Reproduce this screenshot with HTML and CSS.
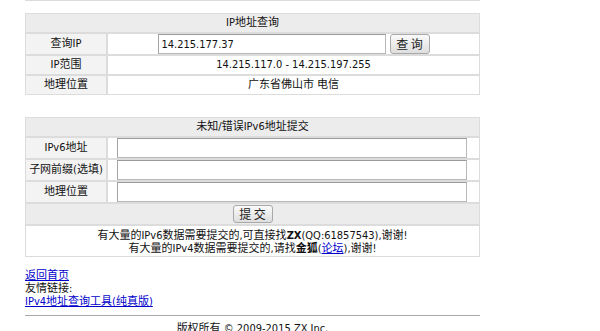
FILE: index.html
```html
<!DOCTYPE html>
<html lang="zh-CN">
<head>
<meta charset="UTF-8">
<meta name="viewport" content="width=device-width, initial-scale=1.0">
<title>IP地址查询</title>
<link rel="stylesheet" href="styles.css">
</head>
<body>
<div class="page">
  <table class="grid prev">
    <colgroup><col class="col-label"><col></colgroup>
    <tr><td class="label"></td><td></td></tr>
  </table>

  <table class="grid query">
    <colgroup><col class="col-label"><col></colgroup>
    <tr><th colspan="2">IP地址查询</th></tr>
    <tr>
      <td class="label">查询IP</td>
      <td class="value">
        <div class="search-box">
          <input type="text" class="ip-input" value="14.215.177.37">
          <button class="btn">查 询</button>
        </div>
      </td>
    </tr>
    <tr><td class="label">IP范围</td><td class="value">14.215.117.0 - 14.215.197.255</td></tr>
    <tr><td class="label">地理位置</td><td class="value">广东省佛山市 电信</td></tr>
  </table>

  <table class="grid submit">
    <colgroup><col class="col-label"><col></colgroup>
    <tr><th colspan="2">未知/错误IPv6地址提交</th></tr>
    <tr><td class="label">IPv6地址</td><td class="field"><input type="text"></td></tr>
    <tr><td class="label">子网前缀(选填)</td><td class="field"><input type="text"></td></tr>
    <tr><td class="label">地理位置</td><td class="field"><input type="text"></td></tr>
    <tr><td colspan="2" class="actions"><button class="btn btn-small">提 交</button></td></tr>
    <tr>
      <td colspan="2" class="note">
        有大量的IPv6数据需要提交的,可直接找<b>ZX</b>(QQ:61857543),谢谢!<br>
        有大量的IPv4数据需要提交的,请找<b>金狐</b>(<a href="#">论坛</a>),谢谢!
      </td>
    </tr>
  </table>

  <div class="links">
    <a href="#">返回首页</a><br>
    友情链接:<br>
    <a href="#">IPv4地址查询工具(纯真版)</a>
  </div>
  <hr>
  <div class="copyright">版权所有 © 2009-2015 ZX Inc.</div>
</div>
</body>
</html>
```

FILE: styles.css
```css
body {
  margin: 0;
  padding: 0;
  background-color: #fff;
  color: #111;
  font-family: "DejaVu Sans Condensed", "DejaVu Sans", "Noto Sans CJK SC", sans-serif;
  font-size: 11px;
}
.page {
  width: 455px;
  margin-left: 25px;
}

/* tables */
.grid {
  width: 455px;
  border-collapse: separate;
  border-spacing: 0;
  table-layout: fixed;
}
.col-label {
  width: 82px;
}
.grid th,
.grid td {
  border: 1px solid #dcdcdc;
  padding: 0;
  line-height: 18px;
  text-align: center;
  font-weight: normal;
}
.grid th {
  background-color: #ececec;
}
.grid .label {
  background-color: #f3f3f3;
  white-space: nowrap;
  overflow: hidden;
}
.prev {
  margin-top: -19px;
}
.prev td {
  height: 18px;
}
.query {
  margin-top: 12px;
}
.submit {
  margin-top: 22px;
}

/* form parts */
.search-box {
  display: flex;
  justify-content: center;
  gap: 4px;
}
input[type="text"] {
  box-sizing: border-box;
  height: 20px;
  margin: 0;
  padding: 0 3px;
  border: 1px solid #b8b8b8;
  border-top-color: #9a9a9a;
  border-left-color: #a4a4a4;
  font-family: inherit;
  font-size: 11px;
  color: #111;
  vertical-align: middle;
}
.ip-input {
  width: 228px;
}
.grid .field {
  padding: 0 12px 0 9px;
  height: 20px;
}
.field input[type="text"] {
  display: block;
  width: 350px;
}
.btn {
  box-sizing: border-box;
  height: 20px;
  width: 40px;
  padding: 0;
  border: 1px solid #a9a9a9;
  border-radius: 3px;
  background: linear-gradient(#fafafa, #dedede);
  font-family: "Noto Sans CJK SC", sans-serif;
  font-size: 12px;
  line-height: 18px;
  color: #222;
}
.btn-small {
  height: 18px;
  line-height: 16px;
  vertical-align: middle;
}
.grid .actions {
  background-color: #ececec;
  height: 20px;
}
.grid .note {
  line-height: 13px;
  padding: 3px 0 1px;
}
.note a {
  color: #00c;
}

/* footer */
.links {
  margin-top: 12px;
  line-height: 13px;
}
.links a {
  color: #00c;
}
hr {
  margin: 7px 0 0;
  border: 0;
  border-top: 1px solid #aaa;
  height: 0;
}
.copyright {
  margin-top: 6px;
  text-align: center;
  line-height: 13px;
}
```
